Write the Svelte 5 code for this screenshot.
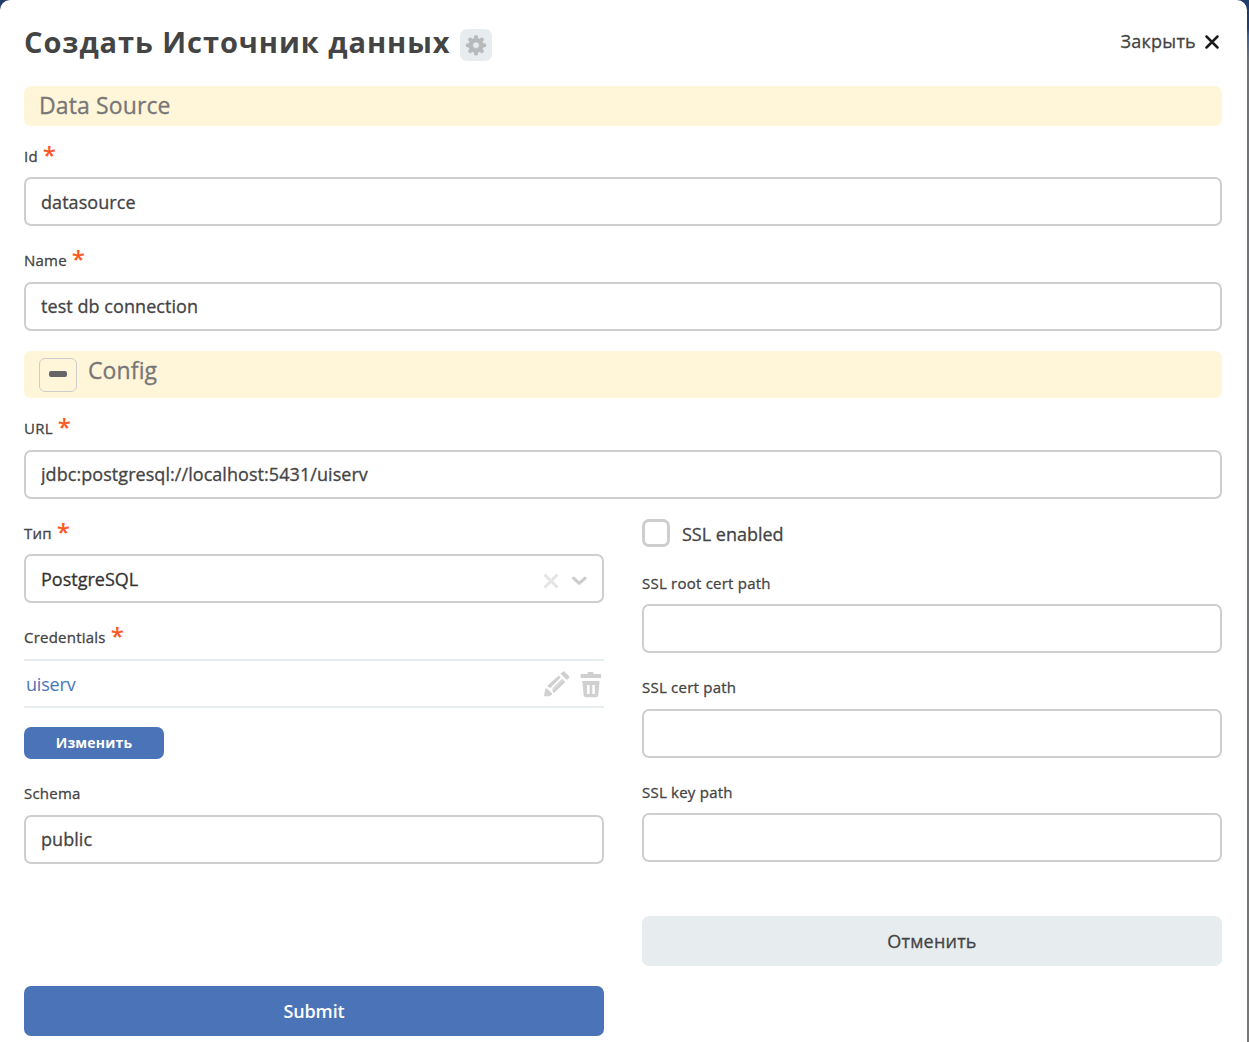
<script>
  let id = $state('datasource');
  let name = $state('test db connection');
  let url = $state('jdbc:postgresql://localhost:5431/uiserv');
  let schema = $state('public');
  let rootCert = $state('');
  let cert = $state('');
  let key = $state('');
  let ssl = $state(false);
</script>

{#snippet label(text, required)}
  <span class="label"><span class="caption">{text}</span>{#if required}<span class="star">*</span>{/if}</span>
{/snippet}

<div class="backdrop">
  <main class="dialog">
    <header>
      <h1>Создать Источник данных</h1>
      <button class="gear" aria-label="Настройки">
        <svg width="22" height="22" viewBox="0 0 24 24"><path fill="#b7b9ba" stroke="#b7b9ba" stroke-width=".8" stroke-linejoin="round" fill-rule="evenodd" d="M10.600 1.800h2.800l.6 3 2 .8 2.500-1.700 2 2-1.700 2.500.8 2 3 .6v2.800l-3 .6-.8 2 1.700 2.500-2 2-2.500-1.700-2 .8-.6 3h-2.800l-.6-3-2-.8-2.500 1.700-2-2 1.700-2.500-.8-2-3-.6v-2.800l3-.6.8-2-1.700-2.500 2-2L8 5.600l2-.8zM12 8.600a3.600 3.600 0 1 0 0 7.200 3.600 3.600 0 0 0 0-7.200z" /></svg>
      </button>
      <button class="close">
        Закрыть
        <svg width="14" height="14" viewBox="0 0 14 14"><path d="M1.500 1.500l11 11M12.500 1.500l-11 11" stroke="#1c1c1c" stroke-width="2.500" stroke-linecap="round" /></svg>
      </button>
    </header>

    <h2 class="section">Data Source</h2>
    <label class="field first">{@render label('Id', true)}<input bind:value={id} /></label>
    <label class="field wide">{@render label('Name', true)}<input class="raised" bind:value={name} /></label>

    <h2 class="section config">
      <button class="collapse" aria-label="Свернуть"><i></i></button>
      <span>Config</span>
    </h2>
    <label class="field url">{@render label('URL', true)}<input class="raised" bind:value={url} /></label>

    <div class="columns">
      <div class="column">
        <div class="field">
          {@render label('Тип', true)}
          <div class="select">
            <span>PostgreSQL</span>
            <svg width="16" height="16" viewBox="0 0 16 16"><path d="M1.500 1.500l13 13M14.500 1.500l-13 13" stroke="#e4e4e4" stroke-width="2.900" /></svg>
            <svg class="chevron" width="16" height="10" viewBox="0 0 16 10"><path d="M2.500 2.200L8.300 7.400l5.800-5.200" fill="none" stroke="#cccccc" stroke-width="3" stroke-linecap="round" stroke-linejoin="round" /></svg>
          </div>
        </div>
        <div class="field credentials">
          {@render label('Credentials', true)}
          <div class="row">
            <span class="link">uiserv</span>
            <svg width="26" height="26" viewBox="0 0 26 26" fill="#d0d0d0">
              <path d="M16.600 2.800L18.700.7q1-1 2 0L25 5q1 1 0 2l-2.100 2.100zM14.800 4.600l1.900 1.900L6.300 17 4 15.700q-.9-.9 0-1.800zM18 7.800l-9.700 9.700 1 1 9.700-9.700zM21.200 11L10.900 21.300q-1 1-1.800 0L8.200 19 18.800 8.600zM1.600 17.200l1.500.5 4.900 4.900.2 1.200L4.900 25.300H.8Q0 25.300 0 24.500z" />
            </svg>
            <svg class="trash" width="22" height="26" viewBox="0 0 22 26" fill="#d0d0d0">
              <path fill-rule="evenodd" d="M7.500 2V1q0-1 1-1h4q1 0 1 1v1H20q1.200 0 1.200 1.200V6H.6V3.200Q.6 2 1.800 2zM2.200 9h17.400l-1.400 14.500q-.2 1.800-2 1.800H5.700q-1.800 0-2-1.800zM7.100 13v9h2.500v-9zm5.200 0v9h2.500v-9z" />
            </svg>
          </div>
          <button class="edit">Изменить</button>
        </div>
        <label class="field schema">{@render label('Schema', false)}<input class="raised" bind:value={schema} /></label>
        <button class="submit">Submit</button>
      </div>

      <div class="column">
        <label class="check"><input type="checkbox" bind:checked={ssl} /><span>SSL enabled</span></label>
        <label class="field root">{@render label('SSL root cert path', false)}<input bind:value={rootCert} /></label>
        <label class="field wide">{@render label('SSL cert path', false)}<input bind:value={cert} /></label>
        <label class="field">{@render label('SSL key path', false)}<input bind:value={key} /></label>
        <button class="cancel">Отменить</button>
      </div>
    </div>
  </main>
</div>

<style>
  :global(body) {
    overflow: hidden;
  }
  .backdrop {
    height: 1042px;
    padding-right: 2px;
    box-sizing: border-box;
    overflow: hidden;
    background: linear-gradient(#223d6c 0, #223d6c 28px, #3f5f94 36px, #707378 60px, #777 100%);
  }
  .backdrop *,
  .backdrop *::before {
    box-sizing: border-box;
  }
  .dialog {
    height: 1042px;
    padding: 0 25px 0 24px;
    background: #fff;
    border-radius: 10px 10px 0 0;
    font: 500 18px/24px 'Open Sans', 'Noto Sans', sans-serif;
    letter-spacing: 0.06px;
    -webkit-text-stroke: 0.3px;
    color: #444;
  }
  button {
    padding: 0;
    border: 0;
    background: none;
    font: inherit;
    letter-spacing: inherit;
    color: inherit;
  }
  svg {
    display: block;
    flex: none;
  }
  header {
    display: flex;
    height: 86px;
    align-items: flex-start;
  }
  h1 {
    margin: 22px 0 0;
    font-size: 29px;
    line-height: 40px;
    font-weight: 700;
    letter-spacing: 0.95px;
    white-space: nowrap;
    -webkit-text-stroke: 0;
  }
  .gear {
    display: flex;
    align-items: center;
    justify-content: center;
    width: 32px;
    height: 32px;
    margin: 29px 0 0 9px;
    border-radius: 7px;
    background: #e7ecef;
  }
  .close {
    display: flex;
    align-items: center;
    gap: 9px;
    margin: 29px 3px 0 auto;
    letter-spacing: 0.25px;
  }
  .close svg {
    margin-top: 1px;
  }
  .section {
    display: flex;
    height: 40px;
    margin: 0;
    padding-left: 15px;
    border-radius: 7px;
    background: #fff5d9;
    color: #777;
    font-size: 23px;
    line-height: 39px;
    font-weight: 500;
    letter-spacing: 0.12px;
  }
  .config {
    height: 47px;
    margin-top: 20px;
    gap: 11px;
  }
  .collapse {
    display: flex;
    align-items: center;
    justify-content: center;
    width: 38px;
    height: 34px;
    margin-top: 7px;
    border: 1px solid #ccc;
    border-radius: 6px;
  }
  .collapse i {
    width: 18px;
    height: 6px;
    margin-bottom: 2px;
    border-radius: 2px;
    background: #666;
  }
  .field {
    display: block;
    margin-top: 20px;
  }
  .label {
    display: flex;
    height: 35px;
    padding-top: 4px;
    font-size: 15px;
    line-height: 20px;
    letter-spacing: 0.23px;
  }
  .wide .label,
  .schema .label {
    height: 36px;
  }
  .first .label {
    height: 31px;
    padding-top: 0;
  }
  .url .label {
    height: 32px;
    padding-top: 0;
  }
  .star {
    margin-left: 5px;
    color: #ff5722;
    font-size: 24px;
    line-height: 18px;
    font-weight: 600;
    -webkit-text-stroke: 0;
  }
  .field input,
  .select {
    display: block;
    width: 100%;
    height: 49px;
    padding: 0 15px;
    border: 2px solid #cecece;
    border-radius: 7px;
    background: #fff;
    font: inherit;
    letter-spacing: inherit;
    color: inherit;
    outline: none;
  }
  .field .raised {
    padding-bottom: 2px;
  }
  .select {
    display: flex;
    align-items: center;
    color: #333;
  }
  .select span {
    flex: 1;
    letter-spacing: 0;
  }
  .select svg {
    margin-top: 4px;
  }
  .select .chevron {
    margin-left: 12px;
  }
  .columns {
    display: grid;
    grid-template-columns: 1fr 1fr;
    gap: 38px;
  }
  .column {
    display: flex;
    flex-direction: column;
  }
  .credentials .label {
    height: 36px;
  }
  .row {
    display: flex;
    align-items: center;
    gap: 10px;
    height: 49px;
    padding: 0 2px;
    border: solid #e7ecef;
    border-width: 2px 0;
  }
  .row svg {
    margin-top: 1px;
  }
  .row .trash {
    margin-top: 2px;
  }
  .link {
    flex: 1;
    color: #4a74b8;
    font-weight: 400;
    letter-spacing: -0.2px;
    -webkit-text-stroke: 0;
  }
  .edit {
    display: block;
    width: 140px;
    height: 32px;
    margin-top: 19px;
    border-radius: 7px;
    background: #4b74b8;
    color: #fff;
    font-size: 14px;
    font-weight: 700;
    letter-spacing: 0.2px;
    -webkit-text-stroke: 0;
  }
  .submit,
  .cancel {
    height: 50px;
    border-radius: 7px;
  }
  .submit {
    margin-top: 122px;
    background: #4b74b8;
    color: #fff;
    font-weight: 600;
    letter-spacing: -0.1px;
    -webkit-text-stroke: 0;
  }
  .cancel {
    margin-top: 54px;
    background: #e7ecef;
    letter-spacing: 0.2px;
  }
  .check {
    display: flex;
    align-items: center;
    gap: 12px;
    height: 28px;
    margin-top: 20px;
  }
  .check span {
    padding-top: 2px;
    letter-spacing: 0;
  }
  .check input {
    appearance: none;
    width: 28px;
    height: 28px;
    margin: 0;
    border: 3px solid #cecece;
    border-radius: 7px;
  }
  .root {
    margin-top: 22px;
  }
</style>
